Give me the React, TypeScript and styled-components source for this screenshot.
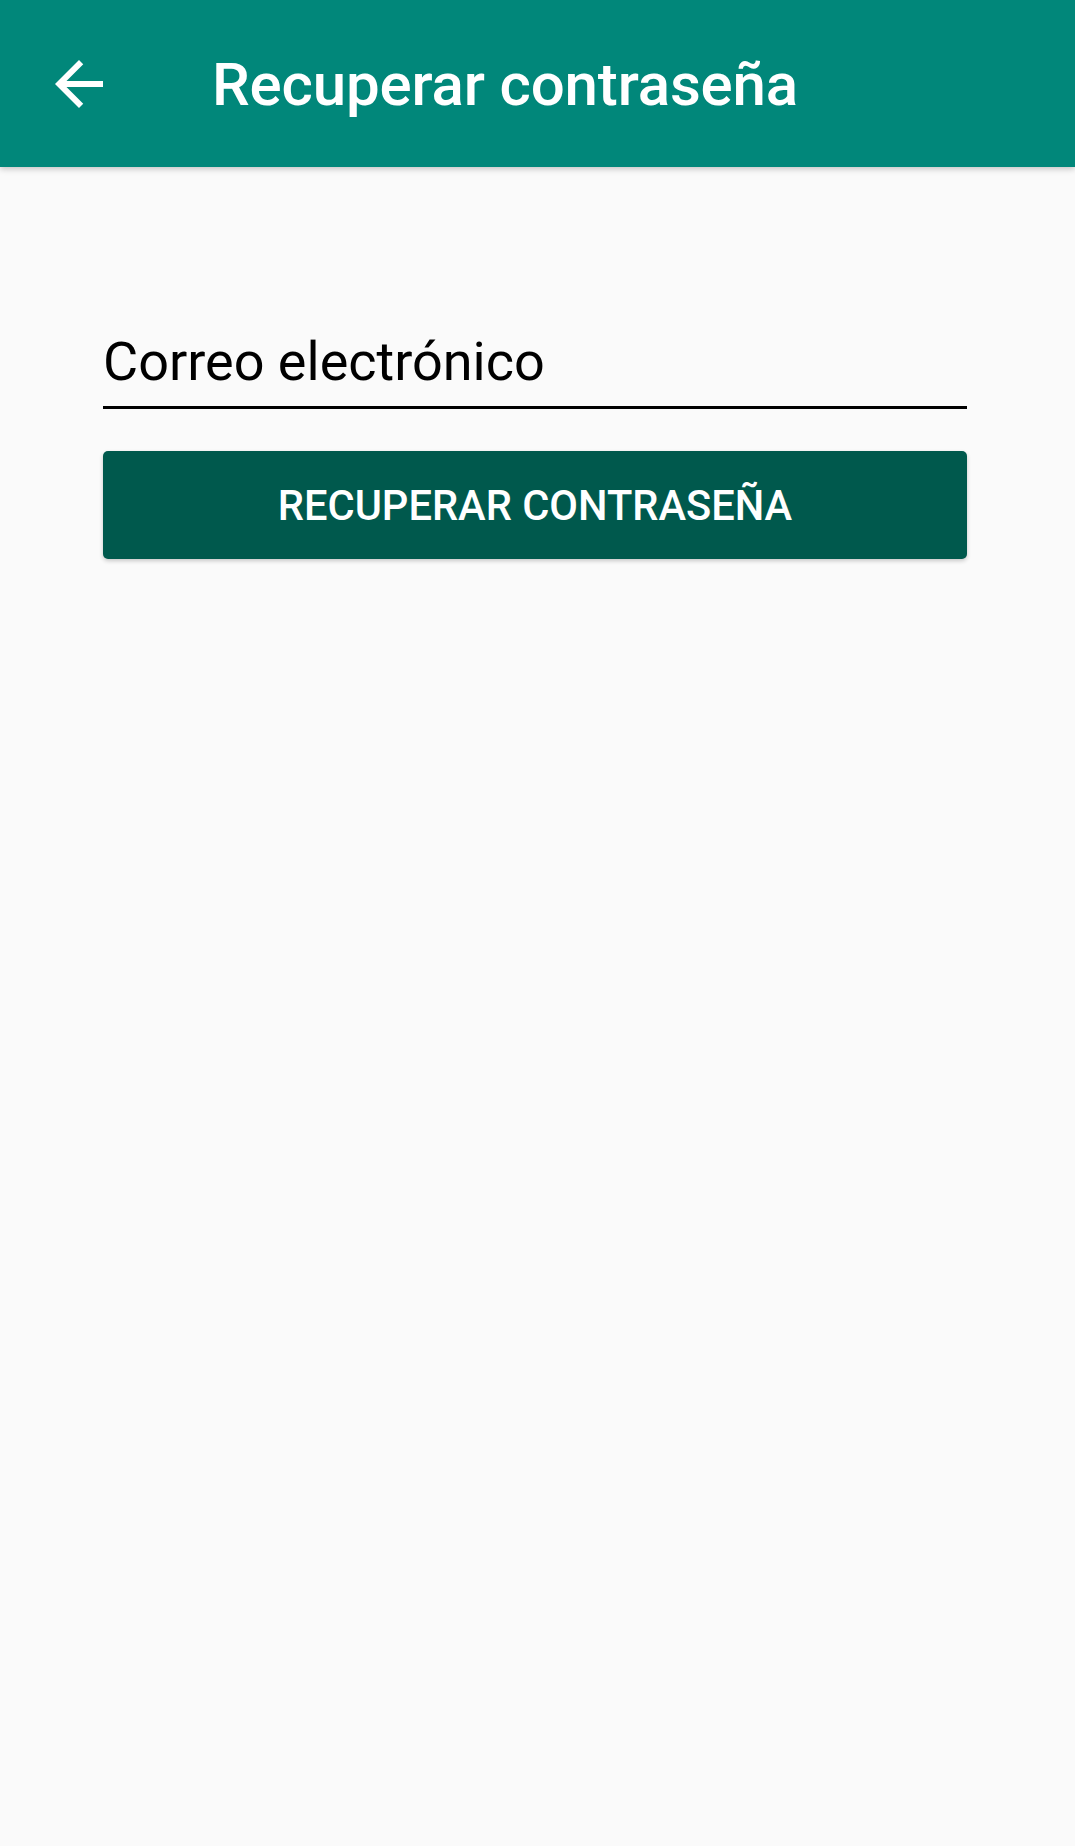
import styled, { createGlobalStyle } from "styled-components";

const GlobalStyle = createGlobalStyle`
    html, body {
        margin: 0;
        padding: 0;
        background: #fafafa;
    }
    body {
        font-family: Roboto, "Noto Sans", sans-serif;
    }
`;

const Screen = styled.div`
    min-height: 1846px;
    background: #fafafa;
    display: flex;
    flex-direction: column;
`;

const Toolbar = styled.header`
    height: 167px;
    background-color: #01877a;
    display: flex;
    align-items: center;
    box-shadow: 0 2px 6px rgba(0, 0, 0, 0.22);
    position: relative;
    z-index: 1;
`;

const BackButton = styled.button`
    width: 72px;
    height: 72px;
    margin-left: 43px;
    padding: 0;
    border: none;
    background: transparent;
    display: flex;
    align-items: center;
    justify-content: center;
    color: #ffffff;
`;

const Title = styled.h1`
    margin: 2px 0 0 97px;
    color: #ffffff;
    font-size: 60px;
    font-weight: 500;
    letter-spacing: -0.15px;
`;

const Form = styled.form`
    padding: 163px 108px 0 103px;
    display: flex;
    flex-direction: column;
`;

const Field = styled.label`
    display: block;
    border-bottom: 3px solid #000000;
    padding-bottom: 12px;
`;

const Input = styled.input`
    width: 100%;
    border: none;
    outline: none;
    background: transparent;
    padding: 0;
    font-family: Roboto, "Noto Sans", sans-serif;
    font-size: 54px;
    line-height: 64px;
    color: #000000;
    &::placeholder {
        color: #000000;
    }
`;

const SubmitButton = styled.button`
    margin-top: 42px;
    height: 108px;
    border: none;
    border-radius: 5px;
    background-color: #00594d;
    color: #ffffff;
    font-family: Roboto, "Noto Sans", sans-serif;
    font-size: 41.6px;
    font-weight: 500;
    letter-spacing: 0;
    text-transform: uppercase;
    box-shadow: 0 2px 4px rgba(0, 0, 0, 0.2);
`;

function App() {
    return <Screen>
        <GlobalStyle />
        <Toolbar>
            <BackButton aria-label="Atrás">
                <svg width="72" height="72" viewBox="0 0 24 24" fill="currentColor">
                    <path d="M20 11H7.83l5.59-5.59L12 4l-8 8 8 8 1.41-1.41L7.83 13H20v-2z" />
                </svg>
            </BackButton>
            <Title>Recuperar contraseña</Title>
        </Toolbar>
        <Form onSubmit={(e) => e.preventDefault()}>
            <Field>
                <Input type="email" placeholder="Correo electrónico" />
            </Field>
            <SubmitButton type="submit">Recuperar contraseña</SubmitButton>
        </Form>
    </Screen>
}

export default App;
